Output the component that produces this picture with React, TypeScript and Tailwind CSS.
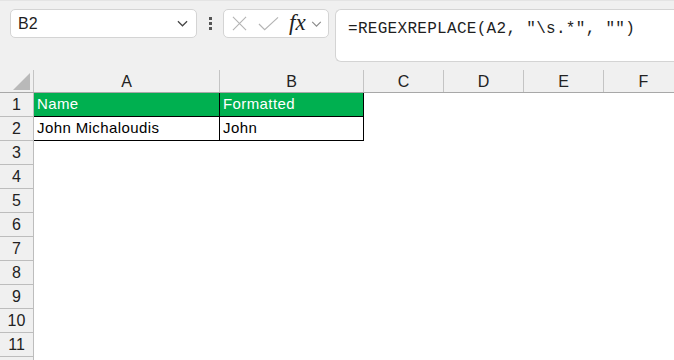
const COLUMNS = [
  { label: 'A', width: 'w-[186px]' },
  { label: 'B', width: 'w-[144px]' },
  { label: 'C', width: 'w-[80px]' },
  { label: 'D', width: 'w-[80px]' },
  { label: 'E', width: 'w-[80px]' },
  { label: 'F', width: 'w-[80px]' },
];

const ROWS = Array.from({ length: 12 }, (_, i) => i + 1);

function Chevron({ className }: { className?: string }) {
  return (
    <svg viewBox="0 0 12 7" className={className} fill="none" stroke="currentColor" strokeWidth="1.3">
      <path d="M1 1l5 5 5-5" />
    </svg>
  );
}

function FormulaToolbar() {
  return (
    <div className="flex items-start h-[70px] pt-[8px] bg-[#f0f0f0] border-t border-[#e4e4e4]">
      <div className="ml-[10px] w-[187px] h-[29px] bg-white border border-[#d4d4d4] rounded-[5px] flex items-center pl-[7px] pr-[8px]">
        <span className="flex-1 text-[16px] text-[#1e1e1e]">B2</span>
        <Chevron className="w-[11px] h-[7px] text-[#444]" />
      </div>

      <div className="w-[26px] h-[29px] flex flex-col items-center justify-center gap-[2px]">
        <span className="w-[3px] h-[3px] bg-[#555]" />
        <span className="w-[3px] h-[3px] bg-[#555]" />
        <span className="w-[3px] h-[3px] bg-[#555]" />
      </div>

      <div className="w-[106px] h-[29px] bg-white border border-[#d4d4d4] rounded-[5px] flex items-center pl-[8px]">
        <svg viewBox="0 0 16 16" className="w-[15px] h-[15px] text-[#b4b4b4]" fill="none" stroke="currentColor" strokeWidth="1.2">
          <path d="M1 1l14 14M15 1L1 15" />
        </svg>
        <svg viewBox="0 0 22 15" className="ml-[11px] w-[21px] h-[15px] text-[#b4b4b4]" fill="none" stroke="currentColor" strokeWidth="1.2">
          <path d="M1 8l6 6L21 1" />
        </svg>
        <span
          className="ml-[10px] text-[23px] leading-none italic font-medium text-[#222] -mt-[2px]"
          style={{ fontFamily: '"Liberation Serif", serif' }}
        >
          fx
        </span>
        <Chevron className="ml-[5px] w-[11px] h-[6px] text-[#8a8a8a]" />
      </div>

      <div className="ml-[6px] flex-1 h-[53px] bg-white border border-r-0 border-[#d4d4d4] rounded-l-[6px] pl-[12px] pt-[6px]">
        <span
          className="text-[16px] tracking-[0.3px] text-[#1e1e1e] whitespace-pre"
          style={{ fontFamily: '"Liberation Mono", monospace' }}
        >
          =REGEXREPLACE(A2, "\s.*", "")
        </span>
      </div>
    </div>
  );
}

function ColumnHeaders() {
  return (
    <div className="flex h-[23px] bg-[#f0f0f0] border-b border-[#a8a8a8]">
      <div className="w-[34px] shrink-0 border-r border-[#c4c4c4] relative">
        <div className="absolute right-[3px] bottom-[2px] w-0 h-0 border-l-[17px] border-l-transparent border-b-[17px] border-b-[#b9b9b9]" />
      </div>
      {COLUMNS.map((col) => (
        <div
          key={col.label}
          className={`${col.width} shrink-0 border-r border-[#c4c4c4] flex items-center justify-center pt-[1px] text-[16px] text-[#222]`}
        >
          {col.label}
        </div>
      ))}
    </div>
  );
}

function DataRow({ row }: { row: number }) {
  const isHeader = row === 1;
  const hasData = row <= 2;
  const values = row === 1 ? ['Name', 'Formatted'] : row === 2 ? ['John Michaloudis', 'John'] : [];

  return (
    <div className="flex h-[24px]">
      <div className="w-[34px] shrink-0 bg-[#f0f0f0] border-r border-b border-[#bdbdbd] flex items-center justify-center text-[16px] text-[#222]">
        {row <= 11 ? row : ''}
      </div>
      {hasData &&
        values.map((v, i) => (
          <div
            key={v}
            className={`${i === 0 ? 'w-[186px]' : 'w-[144px]'} shrink-0 border-r border-b border-black flex items-end pb-[1px] pl-[3px] text-[15px] tracking-[0.4px] ${
              isHeader ? 'bg-[#00b050] text-white' : 'bg-white text-black'
            }`}
          >
            {v}
          </div>
        ))}
      <div className="flex-1 bg-white" />
    </div>
  );
}

export default function App() {
  return (
    <div
      className="w-[674px] h-[360px] overflow-hidden bg-white"
      style={{ fontFamily: '"Liberation Sans", Arial, sans-serif' }}
    >
      <FormulaToolbar />
      <ColumnHeaders />
      {ROWS.map((r) => (
        <DataRow key={r} row={r} />
      ))}
    </div>
  );
}
